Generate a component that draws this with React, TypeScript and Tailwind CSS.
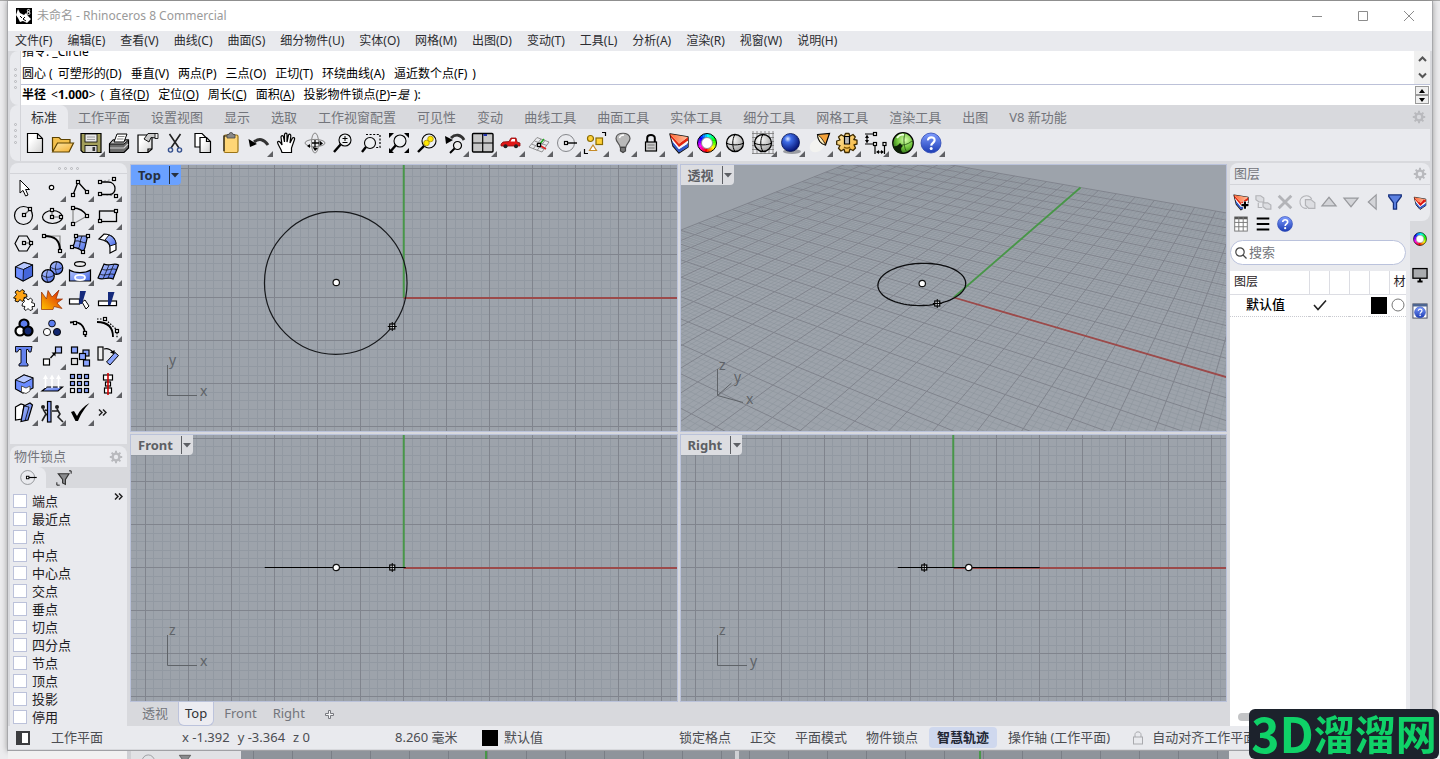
import React from "react";

/* ---------- drawing helpers ---------- */

const P = ({ x, y }: { x: number; y: number }) => (
  <rect x={x - 1.5} y={y - 1.5} width="3" height="3" fill="#fff" stroke="#000" strokeWidth="1.2" />
);

const Cell = ({ children, flyout, size = 28 }: { children: React.ReactNode; flyout?: boolean; size?: number }) => (
  <svg width={size} height={size} viewBox="-14 -14 28 28" fill="none" stroke="#000" strokeWidth="1.2" aria-hidden="true">
    {children}
    {flyout && <path d="M14 8 V14 H8 Z" fill="#5f6064" stroke="none" />}
  </svg>
);

const Defs = () => (
  <svg width="0" height="0" className="absolute" aria-hidden="true">
    <defs>
      <linearGradient id="blue" x1="0" y1="0" x2="1" y2="1">
        <stop offset="0" stopColor="#b9c9ff" />
        <stop offset="1" stopColor="#4467e6" />
      </linearGradient>
      <linearGradient id="paper" x1="0" y1="0" x2="1" y2="1">
        <stop offset="0.3" stopColor="#ffffff" />
        <stop offset="1" stopColor="#cfcfcf" />
      </linearGradient>
      <linearGradient id="orange" x1="1" y1="0" x2="0" y2="1">
        <stop offset="0.2" stopColor="#e03a06" />
        <stop offset="1" stopColor="#ffc400" />
      </linearGradient>
      <linearGradient id="yellow" x1="0" y1="0" x2="1" y2="1">
        <stop offset="0" stopColor="#ffe9a8" />
        <stop offset="1" stopColor="#f2ad2c" />
      </linearGradient>
      <linearGradient id="coral" x1="0" y1="0" x2="1" y2="0">
        <stop offset="0" stopColor="#ff6a35" />
        <stop offset="1" stopColor="#ffc1a0" />
      </linearGradient>
      <linearGradient id="help" x1="0" y1="0" x2="0" y2="1">
        <stop offset="0" stopColor="#7f9dff" />
        <stop offset="1" stopColor="#1c3cb4" />
      </linearGradient>
      <radialGradient id="ballBlue" cx="0.35" cy="0.3" r="0.75">
        <stop offset="0" stopColor="#dfeaff" />
        <stop offset="0.25" stopColor="#3f6de8" />
        <stop offset="1" stopColor="#020d6b" />
      </radialGradient>
      <radialGradient id="ballGreen" cx="0.6" cy="0.35" r="0.75">
        <stop offset="0" stopColor="#d9ffb0" />
        <stop offset="0.5" stopColor="#74c83e" />
        <stop offset="1" stopColor="#1b5a0c" />
      </radialGradient>
      <radialGradient id="ballGray" cx="0.35" cy="0.3" r="0.8">
        <stop offset="0" stopColor="#ffffff" />
        <stop offset="1" stopColor="#9a9a9a" />
      </radialGradient>
    </defs>
  </svg>
);

const Wheel = ({ r = 8, w = 4 }: { r?: number; w?: number }) => (
  <g>
    {Array.from({ length: 24 }, (_, i) => {
      const a = (i / 24) * Math.PI * 2;
      const b = ((i + 1.15) / 24) * Math.PI * 2;
      return (
        <path
          key={i}
          d={`M${Math.cos(a) * r} ${Math.sin(a) * r} A${r} ${r} 0 0 1 ${Math.cos(b) * r} ${Math.sin(b) * r}`}
          stroke={`hsl(${(360 - i * 15 + 90) % 360} 100% 50%)`}
          strokeWidth={w}
        />
      );
    })}
    <circle r={r + w / 2} strokeWidth="1" />
    <circle r={r - w / 2} fill="#fff" strokeWidth="0.8" stroke="#777" />
  </g>
);

const Lens = ({ x = 2, y = -3, r = 6 }: { x?: number; y?: number; r?: number }) => (
  <g>
    <path d={`M${x - r * 0.7} ${y + r * 0.7} L-9 9`} strokeWidth="2.4" />
    <circle cx={x} cy={y} r={r} fill="#eef0f2" strokeWidth="1.1" />
  </g>
);

const Layers = ({ check }: { check?: boolean }) => (
  <g stroke="none">
    <path d="M-9 -9 L9 -6 V4 L0 10 L-6 3Z" fill="#fff" stroke="#111" strokeWidth="1.4" strokeLinejoin="round" />
    <path d="M-7 -2 L0 6 L9 0.5 V4 L0 9.5 L-6 2.5Z" fill="#2f57c8" />
    <path d="M-8 -6 L0 3.5 L9 -2.5 V0 L0 6.3 L-7 -2.5Z" fill="#f4f6fb" />
    <path d="M-9 -9 L0 0.5 L9 -6 V-2.5 L0 4 L-8 -5.5Z" fill="#e3260f" />
    <path d="M-9 -9 L9 -6 L0 0.8Z" fill="url(#coral)" />
    {check && <path d="M-2 -1 L1 3 L7 -5" stroke="#d11" strokeWidth="2.2" />}
  </g>
);

const HelpBall = ({ r = 10 }: { r?: number }) => (
  <g>
    <circle r={r} fill="url(#help)" stroke="#2c48b4" strokeWidth="0.8" />
    <path
      d="M-3 -2.6 C-3.2 -6.6 3.6 -6.8 3.6 -2.8 C3.6 -0.4 0.4 0 0.2 2.6"
      stroke="#fff"
      strokeWidth="2.2"
      transform={`scale(${r / 10})`}
    />
    <circle cx="0.2" cy={5.6 * (r / 10)} r={1.5 * (r / 10)} fill="#fff" stroke="none" />
  </g>
);

const WireBall = ({ r = 8.5 }: { r?: number }) => (
  <g strokeWidth="1.3">
    <circle r={r} fill="url(#ballGray)" />
    <path d={`M${-r} 0 C-5 2.5 5 2.5 ${r} 0 M0 ${-r} C-3 -4 -3 4 0 ${r}`} strokeWidth="1" />
  </g>
);

const Gear = () => (
  <svg width="14" height="14" viewBox="-7 -7 14 14" fill="none" stroke="#b9babe" aria-hidden="true">
    <circle r="3.4" strokeWidth="2.4" />
    {Array.from({ length: 8 }, (_, i) => (
      <path key={i} d="M0 -3.6 V-6.2" strokeWidth="2" transform={`rotate(${i * 45})`} />
    ))}
  </svg>
);

const SnapMark = () => (
  <g>
    <circle cx="-1" r="8.5" stroke="#85878b" strokeWidth="1" />
    <path d="M0 0 H10" strokeWidth="1.4" />
    <P x={-1} y={0} />
  </g>
);

const More = () => (
  <svg width="9" height="7" viewBox="0 0 9 7" fill="none" stroke="#222" strokeWidth="1.5" aria-hidden="true">
    <path d="M1 0.5L4 3.5L1 6.5M5 0.5L8 3.5L5 6.5" />
  </svg>
);

/* ---------- toolbar ---------- */

type Tool = { name: string; fly?: boolean; art: React.ReactNode };

const COG =
  "M-1.5 -9.5 H2 L2.8 -6.8 L6 -8.5 L8.3 -6 L6.8 -3.5 L10 -2.8 V1 L7 1.8 L8.5 5 L6 7.5 L3 6 L2 9.5 H-2 L-3 6.2 L-6 8 L-8.5 5.3 L-7 2.5 L-10.3 1.5 V-2 L-7 -3 L-8.5 -6 L-5.8 -8.3 L-2.8 -6.5Z";

const toolbar: Tool[] = [
  { name: "新建", art: <><path d="M-7.5 -9.5 H2.5 L7.5 -4.5 V9.5 H-7.5Z" fill="url(#paper)" /><path d="M2.5 -9.5 V-4.5 H7.5" /></> },
  { name: "打开", art: <><path d="M-10.5 8 V-5.5 H-4 L-2 -3.5 H7 V0" fill="#f3c04c" stroke="#5c4200" /><path d="M-10.5 9 L-5.5 0 H10.5 L6 9Z" fill="url(#yellow)" stroke="#5c4200" /></> },
  { name: "保存", fly: true, art: <><path d="M-10 -9.5 H10 V9.5 H-8 L-10 7.5Z" fill="#a39f5a" /><rect x="-6" y="-9" width="12" height="8" fill="#e8e8e8" strokeWidth="0.8" /><path d="M-4 -6 H4 M-4 -3.5 H4" stroke="#888" strokeWidth="0.8" /><rect x="-6" y="2.5" width="12" height="7" fill="#dcdcdc" strokeWidth="0.8" /><rect x="1.5" y="4" width="2.6" height="4" fill="#333" stroke="none" /></> },
  { name: "打印", art: <><path d="M-9.5 1 L-6 -3 H9.5 V5 L5 9.5 H-9.5Z" fill="#6b6b6b" /><path d="M-9.5 1 L-6 -3 H9.5 L5 1Z" fill="#c4c4c4" strokeWidth="0.9" /><path d="M-5 -1 L-2 -9 H8 L5 -1Z" fill="#fff" strokeWidth="1" /><path d="M-1 -6.5 H5.5 M-2 -4 H4.5" stroke="#777" strokeWidth="0.9" /><path d="M-9 5 H5 L9 1" stroke="#d0d0d0" strokeWidth="1.2" /></> },
  { name: "文件属性", art: <><path d="M-9 -8 H5 V6 L1 9.5 H-9Z" fill="url(#paper)" /><path d="M1 9.5 V6 H5" /><path d="M-3 -4 L1 -9.5 H9.5 V-5 L4 -5.5 L2 -1 Z" fill="#c9c9c9" strokeWidth="0.9" /><path d="M8 -9.5 H11 V-4.5 H8Z" fill="#eee" strokeWidth="0.8" /></> },
  { name: "剪切", art: <><path d="M-5.5 -9 L4 5 M5.5 -9 L-4 5" stroke="#222" strokeWidth="1.6" /><circle cx="-4.5" cy="7" r="2.1" stroke="#34508f" strokeWidth="1.4" /><circle cx="4.5" cy="7" r="2.1" stroke="#34508f" strokeWidth="1.4" /></> },
  { name: "复制", art: <><path d="M-8 -9.5 H-1 L3 -5.5 V4 H-8Z" fill="#fff" /><path d="M-3 -5.5 H3.5 L7.5 -1.5 V9.5 H-3Z" fill="url(#paper)" /><path d="M3.5 -5.5 V-1.5 H7.5" /></> },
  { name: "粘贴", art: <><rect x="-7" y="-8" width="14" height="17.5" rx="1.5" fill="#ffd676" stroke="#9b7416" /><path d="M-7 8 V-7 H-4" stroke="#222" /><path d="M-4 -5 V-8.5 H-2 A2 2 0 0 1 2 -8.5 H4 V-5Z" fill="#888" stroke="#444" strokeWidth="0.8" /></> },
  { name: "撤销", fly: true, art: <><path d="M-5 -1 C0 -5 5 -4 9 2" stroke="#333" strokeWidth="3" /><path d="M-10.5 -4 L-9 4 L-2 1Z" fill="#000" stroke="none" /></> },
  { name: "平移", art: <path d="M-5 9.5 C-6 5 -9.5 2 -9.5 -1 C-8 -3 -6 0 -5 2 L-6 -6 C-5.5 -8 -3.8 -7.5 -3.5 -6 L-2.5 -1 V-8.5 C-2 -10.5 0 -10 0 -8.5 V-1 L1.5 -8 C2.5 -9.5 4 -8.5 3.8 -7 L3 0 L5.5 -5 C7 -6 8 -5 7.5 -3.5 L4.5 5 V9.5Z" fill="#fff" /> },
  { name: "旋转视图", art: <><ellipse rx="10" ry="3.6" stroke="#888" strokeWidth="1" /><ellipse rx="3.6" ry="10" stroke="#888" strokeWidth="1" /><path d="M-3 0 H4 M0 -3 V4" strokeWidth="1.3" /><path d="M4.5 -2.5 L8 0.5 L4.5 3Z M-2.5 4 L0 8 L3 5Z M-5 1 L-8 3 L-5 5Z" fill="#000" stroke="none" /></> },
  { name: "缩放", art: <><Lens /><path d="M-0.5 -4.5 H4.5 M2 -7 V-2 M-0.5 -0.5 H4.5" strokeWidth="1" /></> },
  { name: "框选缩放", art: <><path d="M-5 -8.5 H9 V4.5 H4" strokeDasharray="2 1.6" /><Lens x={-1} y={0} r={5.5} /></> },
  { name: "缩放至最大范围", art: <><Lens x={1} y={-2} r={6} /><path d="M-10 -5 V-10 H-5Z M10 -5 V-10 H5Z M10 5 V10 H5Z M-10 5 V10 H-5Z" fill="#000" stroke="none" /></> },
  { name: "缩放至选取物件", art: <><Lens x={2} y={-2} r={7} /><circle cx="3.5" cy="-4" r="2.8" fill="#ffe800" stroke="#a98f00" strokeWidth="0.8" /><circle cx="-0.5" cy="0" r="2.8" fill="#ffe800" stroke="#a98f00" strokeWidth="0.8" /></> },
  { name: "撤销视图改变", fly: true, art: <><path d="M-4 -5 C0 -9 6 -9 9 -3" stroke="#333" strokeWidth="2.8" /><path d="M-10 -7 L-9 1 L-2 -3Z" fill="#000" stroke="none" /><circle cx="2.5" cy="2.5" r="4" fill="#eee" /><path d="M-0.5 5.5 L-5 10" strokeWidth="2" /></> },
  { name: "工作视窗配置", fly: true, art: <><rect x="-10.5" y="-9.5" width="20.5" height="18.5" rx="1" fill="#c7c7c7" strokeWidth="1.4" /><path d="M-0.3 -9 V9 M-10 0 H10" strokeWidth="1.2" /><path d="M0.5 -8 H4" stroke="#23a" strokeWidth="2" /></> },
  { name: "设置视图", fly: true, art: <><path d="M-10 1 L-8 -1 L-2 -1.5 L0 -5 H5 L6 -1 L9 0 V3 H-10Z" fill="#e01818" stroke="#8d0c0c" strokeWidth="0.8" /><path d="M-0.5 -1.5 L1 -4 H4 V-1.5Z" fill="#fff" stroke="none" /><circle cx="-5.5" cy="3.3" r="2" fill="#222" stroke="none" /><circle cx="5" cy="3.3" r="2" fill="#222" stroke="none" /></> },
  { name: "工作平面", fly: true, art: <><path d="M-10 4 L-2 -5.5 L10 -1 L3 9Z M-7.5 1 L5 6 M-4.5 -2 L8 2.5 M-6 6 L2 -4 M-2 7.5 L6 -2.5" stroke="#888" strokeWidth="0.9" /><path d="M0 2 L7 6" stroke="#d22" strokeWidth="1.5" /><path d="M0 2 L5 -4" stroke="#2a2" strokeWidth="1.5" /><P x={0} y={2} /></> },
  { name: "物件锁点", fly: true, art: <SnapMark /> },
  { name: "选取", fly: true, art: <><circle cx="-4.5" cy="-4.5" r="3" fill="#ffd23a" stroke="#8b6c00" /><rect x="1" y="-5" width="6.5" height="6.5" fill="#ffd23a" stroke="#8b6c00" /><path d="M-2 2 L1.5 7.5 H-5.5Z" fill="#fff" stroke="#c58a28" /><path d="M7 -10.5 H10.5 V-7 M-10.5 6 V10.5 H-7" /></> },
  { name: "隐藏物件", fly: true, art: <><path d="M-3 4 C-3 1 -7 -1 -7 -4.5 C-7 -11.5 7 -11.5 7 -4.5 C7 -1 3 1 3 4Z" fill="#b9b9b9" stroke="#555" /><path d="M-3.5 -5 C-3 -7 -1 -8 1 -8" stroke="#fff" strokeWidth="1.5" /><path d="M-2.5 4.5 H2.5 V8 L0 9.5 L-2.5 8Z" fill="#777" stroke="#444" /></> },
  { name: "锁定物件", fly: true, art: <><path d="M-3.8 0 V-5 C-3.8 -9 3.8 -9 3.8 -5 V0" strokeWidth="2" /><rect x="-5.5" y="-1" width="11" height="9" fill="#c9c9c9" /><path d="M-3.5 2 H3.5 M-3.5 5 H3.5" stroke="#777" /></> },
  { name: "图层", fly: true, art: <Layers /> },
  { name: "物件属性", fly: true, art: <Wheel r={7.5} w={4} /> },
  { name: "着色", art: <WireBall /> },
  { name: "渲染着色", fly: true, art: <><path d="M-11 -9.5 H11 M-11 -5.5 H11 M-11 -1.5 H11 M-11 2.5 H11 M-11 6.5 H11 M-11 10.5 H11 M-10 -12 V11 M-6 -12 V11 M-2 -12 V11 M2 -12 V11 M6 -12 V11 M10 -12 V11" stroke="#777" strokeWidth="0.8" /><WireBall /></> },
  { name: "渲染", fly: true, art: <><ellipse cx="1" cy="8.5" rx="9" ry="2.4" fill="#9a9ca2" stroke="none" /><circle cx="-0.5" cy="-0.5" r="9" fill="url(#ballBlue)" stroke="#03104f" strokeWidth="0.8" /></> },
  { name: "灯光", fly: true, art: <><ellipse cx="-3" cy="1" rx="8" ry="6" fill="#f3f3f0" stroke="none" transform="rotate(-35)" /><path d="M-1.5 -8.5 L10.5 -9.5 L6.5 2 C2 1 -1 -3 -1.5 -8.5Z" fill="#f5a23a" /><path d="M-1.5 -8.5 C1 -7 5 -2 6.5 2 C2 1 -1 -3 -1.5 -8.5Z" fill="#fff0c0" strokeWidth="0.8" /></> },
  { name: "选项", fly: true, art: <><path d={COG} fill="url(#yellow)" stroke="#3d2a00" strokeWidth="1.3" strokeLinejoin="round" /><path d="M-2.5 -6.5 H2.5 V1 H-2.5Z" fill="#b8b8b8" /><path d="M-3 4 C-1 5.5 1 5.5 3 4" stroke="#7a5200" /></> },
  { name: "尺寸标注", fly: true, art: <><path d="M-10 -9 H-1 M-10 1 H-2 M-8 -7 V-1 M0 3 V11 M9.5 3 V11 M2 9 H8" /><path d="M-10 -5 L-8 -8.5 L-6 -5Z M-10 -3 L-8 0.5 L-6 -3Z M4 7 L1 9 L4 11Z M6 7 L9 9 L6 11Z" fill="#000" stroke="none" /><P x={0} y={-9} /><P x={0} y={1} /><P x={9.5} y={1} /></> },
  { name: "材质", fly: true, art: <><circle r="10.3" fill="url(#ballGreen)" /><path d="M-10 3 C-6 4 -5 2 -3 0 L0 3 C-3 5 -2 8 0 10 C-5 11 -9 8 -10 3Z" fill="#0c1f06" stroke="none" /><path d="M-1 2 C4 2 8 -1 10 -3 M2 -10 C0 -4 1 6 4 9" stroke="#2f5d18" strokeWidth="0.9" /><path d="M-6 -5 C-4 -8 -1 -9 1 -8" stroke="#f2ffe6" strokeWidth="1.8" /></> },
  { name: "说明", fly: true, art: <HelpBall /> },
];

const palette: Tool[] = [
  { name: "指针", art: <path d="M-4 -8 V5 L-1 2.4 L1.6 8 L4 7 L1.6 1.5 H5.5Z" fill="#fff" strokeWidth="1" /> },
  { name: "单点", fly: true, art: <circle cx="-0.5" cy="-0.5" r="2.2" fill="#fff" /> },
  { name: "多重直线", fly: true, art: <><path d="M-7 7 L-2 -6 L7 4" strokeWidth="1.3" /><P x={-7} y={7} /><P x={-2} y={-6} /><P x={7} y={4} /></> },
  { name: "控制点曲线", fly: true, art: <><path d="M-8 -6 L6 -9 M8 8 L-8 6" stroke="#777" strokeDasharray="2 2" strokeWidth="0.8" /><path d="M-8 -6 H0 C9 -6 9 6 2 6.5 H-8" strokeWidth="1.3" /><P x={-8} y={-6} /><P x={6} y={-9} /><P x={-8} y={6} /><P x={8} y={8} /></> },
  { name: "圆", fly: true, art: <><circle cx="-0.5" cy="-0.5" r="9" strokeWidth="1.2" /><path d="M0 -1 L6 -6.5" stroke="#666" /><P x={0} y={-1} /><P x={6} y={-7} /></> },
  { name: "椭圆", fly: true, art: <><ellipse cx="0.5" cy="1" rx="10" ry="6.5" strokeWidth="1.2" /><path d="M0 -6 V1 H9" stroke="#666" /><P x={0} y={-6} /><P x={0} y={1} /><P x={9} y={1} /></> },
  { name: "圆弧", fly: true, art: <><path d="M-7 -8 V8 L7 0" stroke="#888" /><path d="M-7 -8 C-1 -8 4 -5 7 0" strokeWidth="1.3" /><P x={-7} y={-8} /><P x={-7} y={8} /><P x={7} y={0} /></> },
  { name: "矩形", fly: true, art: <><rect x="-8.5" y="-5" width="17" height="10.5" strokeWidth="1.3" /><P x={8} y={-5} /><P x={-8} y={5} /></> },
  { name: "多边形", fly: true, art: <><path d="M-9 -0.5 L-5 -8 H3 L7.5 -0.5 L3 7 H-5Z" strokeWidth="1.2" /><path d="M0 -1 H7" stroke="#666" /><P x={0} y={-1} /><P x={7} y={-1} /></> },
  { name: "曲线圆角", fly: true, art: <><path d="M-8 -8 H8 V7" stroke="#888" /><path d="M-8 -8 C3 -8 8 -4 8 7" strokeWidth="2" /><P x={-8} y={-8} /><P x={8} y={7} /></> },
  { name: "曲面", fly: true, art: <><path d="M-4 -8 L8 -8 C5 -2 7 2 3 8 C0 4 -3 4 -8 3 C-4 0 -6 -4 -4 -8Z" fill="url(#blue)" /><path d="M2 -8 C-1 -2 1 2 -2 5 M-5 -3 C-1 -4 3 -1 6 -1" strokeWidth="0.8" /><P x={-4} y={-8} /><P x={8} y={-8} /><P x={3} y={8} /><P x={-8} y={3} /></> },
  { name: "旋转成形", fly: true, art: <><path d="M-9 -5 L-4 -10 C4 -10 8 -5 8 2 V6 L2 9 V4 C2 -1 -3 -4 -9 -5Z" fill="#fff" /><path d="M-3 -4 L1 -9 C6 -7 8 -3 8 0 L2 2 C1 -1 0 -3 -3 -4Z" fill="url(#blue)" strokeWidth="0.9" /></> },
  { name: "立方体", fly: true, art: <><path d="M-8.5 -5 L0 -9.5 L8.5 -7 V4 L-1 9 L-8.5 5Z" fill="#6b8cff" /><path d="M-8.5 -5 L0 -9.5 L8.5 -7 L-0.5 -2.5Z" fill="#b7c8ff" strokeWidth="0.8" /><path d="M-0.5 -2.5 L8.5 -7 V4 L-1 9Z" fill="#4466da" strokeWidth="0.8" /></> },
  { name: "布尔运算", fly: true, art: <><circle cx="4.5" cy="-4" r="6.3" fill="url(#blue)" /><path d="M-1.5 -5 C2 -2 8 -2 10.5 -5 M5 -10 C3 -6 3 -1 5 2" strokeWidth="0.7" /><circle cx="-4" cy="4" r="6.3" fill="url(#blue)" /><path d="M-10 3 C-7 6 -1 6 2 3 M-4 -2 C-6 2 -6 6 -4 10" strokeWidth="0.7" /></> },
  { name: "投影曲线", fly: true, art: <><ellipse cy="-8" rx="5.5" ry="2.4" fill="#eee" /><path d="M-10.5 -2 C-5 1.5 5 1.5 10.5 -2 V9 H-10.5Z" fill="url(#blue)" /><ellipse cy="5.5" rx="5" ry="2.6" fill="#8fa8ff" stroke="#fff" strokeWidth="1.8" /></> },
  { name: "网格", fly: true, art: <><path d="M-4 -8 C1 -5 6 -10 10.5 -7 L5 7 C0 4 -5 9 -10 6Z" fill="url(#blue)" /><path d="M1 -7 L-5 7 M6 -8 L0 6 M-6 -3 C-1 0 4 -5 9 -2 M-8 2 C-3 5 2 0 7 3" strokeWidth="0.7" /></> },
  {
    name: "组合",
    fly: true,
    art: (
      <>
        <path d="M-9.5 -3 L-7.5 -5.5 L-9 -8 L-6.5 -10 L-4.5 -8 L-2 -10.5 L0.5 -9 L-0.5 -6.5 L2.5 -6 L3 -3 L0 -2.5 L0.5 0 L-2 1.5 L-4 -0.5 L-6 2 L-9 1 L-8 -1.5 L-10.5 -2Z" fill="#ffa413" strokeWidth="0.9" />
        <path d="M-1.5 3.5 L0.5 1.5 L-0.5 -1 L2 -2.5 L4 0 L6.5 -2 L8.5 0 L7.5 2.5 L10.5 3.5 L10.5 6.5 L8 6.5 L8.5 9.5 L6 10.5 L4 8.5 L2 10.5 L0 9 L1 6.5 L-2 6Z" fill="#fff" strokeWidth="0.9" />
      </>
    ),
  },
  { name: "炸开", art: <path d="M-10.5 9.5 V-8 L-5.5 -1 L-4 -9.5 L0 -3 L7 -10 L4 -1 L10.5 -1 L5 3 L10 8.5 L2 6.5 L1 9.5Z" fill="url(#orange)" stroke="#8f2c00" strokeWidth="0.7" /> },
  { name: "修剪", art: <><rect x="-10.5" y="-1" width="10" height="5" fill="#fff" /><path d="M2 2 L5 0 L9 6 L6 9Z" fill="#fff" strokeWidth="1" /><path d="M0 -9 H6 L2 4 H-1Z" fill="#152a7c" stroke="none" /></> },
  { name: "分割", art: <><rect x="-9.5" y="1" width="18" height="4.6" fill="#fff" /><path d="M0 -8 H6.5 L2.5 5 H0Z" fill="#152a7c" stroke="none" /></> },
  { name: "群组", fly: true, art: <><circle cx="0" cy="-4" r="4.5" fill="#5c7df0" strokeWidth="2.2" /><circle cx="-4" cy="3" r="4.5" fill="#fff" strokeWidth="2.2" /><circle cx="4" cy="3" r="4.5" fill="#12276f" strokeWidth="2.2" /></> },
  { name: "解散群组", art: <><circle cx="0" cy="-4.5" r="3.4" fill="#5c7df0" strokeWidth="0.9" /><circle cx="-5" cy="4" r="3.6" fill="#fff" strokeWidth="0.9" /><circle cx="5" cy="4" r="3.6" fill="#12276f" strokeWidth="0.9" /></> },
  { name: "编辑曲线", art: <><path d="M-10 -5.5 C0 -7 5 -3 5.5 9" strokeWidth="1.8" /><P x={-5} y={-5} /><P x={5} y={5} /></> },
  { name: "打开控制点", fly: true, art: <><path d="M-11 -9 H-3 L9 2 V10" strokeDasharray="1.5 1.5" /><path d="M-11 -6 C0 -6 5 0 5 9" strokeWidth="1.8" /><P x={-3} y={-9} /><P x={9} y={3} /></> },
  { name: "文字", art: <path d="M-8.5 -9.5 H8 L7 -4 H5 L4 -6.5 H2.5 V7 L4 8 V10 H-5 V8 L-3 7 V-6.5 H-5 L-6.5 -4 H-8.5Z" fill="#6482ee" strokeWidth="0.9" /> },
  { name: "移动", fly: true, art: <><rect x="3.5" y="-9" width="6" height="6" fill="#a9bcff" /><rect x="-8.5" y="3" width="6" height="6" fill="#fff" /><path d="M-1.5 2 L3 -3" strokeWidth="1.3" /><path d="M-0.5 -3.5 H3.5 V0.5Z" fill="#000" stroke="none" /></> },
  { name: "复制物件", art: <><g fill="#8ba5ff"><rect x="-8.5" y="-9" width="6" height="6" /><rect x="3" y="-6" width="6" height="6" /><rect x="-0.5" y="-2.5" width="6" height="6" /><rect x="3.5" y="4" width="6" height="6" /></g><rect x="-8.5" y="2.5" width="6" height="6" fill="#e2e2e2" /></> },
  { name: "旋转", art: <><rect x="-10" y="-9" width="5" height="13" fill="#eee" /><path d="M-4 -7 C0 -8 4 -6 5 -3" /><path d="M2 -3.5 L7 -1.5 L6.5 -6Z" fill="#000" stroke="none" /><path d="M-1.5 6 L7 -3.5 L10.5 -0.5 L2 9Z" fill="#8ba5ff" strokeWidth="1" /></> },
  { name: "实体编辑", fly: true, art: <><path d="M-8.5 -4 L0 -9 L9 -6 V4 L-1 9 L-8.5 5Z" fill="#6b8cff" /><path d="M-8.5 -4 L0 -9 L9 -6 L0 -1Z" fill="#b7c8ff" strokeWidth="0.8" /><path d="M-2.5 2 L2 4 L6 2 V7 L2 9.5 L-2.5 8Z" fill="#fff" stroke="#444" strokeWidth="0.9" /></> },
  { name: "挤出", fly: true, art: <><path d="M-10 7 L-5 3 H10.5 L6 7Z" fill="url(#blue)" /><path d="M-6.5 4 V-6 M0 4 V-6 M6.5 4 V-6" stroke="#fff" strokeWidth="1.6" /><path d="M-9 -5 L-6.5 -9.5 L-4 -5Z M-2.5 -5 L0 -9.5 L2.5 -5Z M4 -5 L6.5 -9.5 L9 -5Z" fill="#fff" stroke="none" /></> },
  { name: "阵列", fly: true, art: <g>{[-9.5, -2.5, 4.5].map((y) => [-9.5, -2.5, 4.5].map((x) => <rect key={`${x}${y}`} x={x} y={y} width="4" height="4" fill={x < -9 && y > 4 ? "#fff" : "#8fa8ff"} />))}</g> },
  { name: "对齐", fly: true, art: <><rect x="-4.5" y="-9" width="9" height="5" fill="#fff" /><rect x="-2.5" y="-2" width="5" height="4" fill="#fff" /><rect x="-3.5" y="4" width="7" height="5" fill="#fff" /><path d="M0 -11 V11" stroke="#d40000" strokeWidth="1.6" /></> },
  { name: "变形", fly: true, art: <><path d="M-8.5 -5 L-3 -8 L0 -7 L-2 7 L-8.5 8Z" fill="#fff" /><path d="M0 -6 L6 -9 L8.5 -7 L4 8 L-3 9.5Z" fill="url(#blue)" /><path d="M0 -6 L5 -5 L1 9" strokeWidth="0.8" /></> },
  { name: "分析", fly: true, art: <><circle cx="-9" cy="-5" r="2" fill="#222" stroke="none" /><circle cx="5" cy="-5" r="2" fill="#222" stroke="none" /><path d="M-9 -3 L-6 2 L-10 9 M-7 -2 L-2 -1 M5 -3 L8 2 L6 5 L11 10 M6 -1 H0 M-5 2 L-3 8" stroke="#222" strokeWidth="1.6" /><rect x="-4.5" y="-10.5" width="3.5" height="20.5" fill="#86a0ff" /></> },
  { name: "检查物件", fly: true, art: <path d="M-9 0 L-6 -1 L-3 4 C0 -2 4 -6 9.5 -9 C4 -3 1 2 -2 9 H-4.5Z" fill="#000" stroke="none" /> },
];

/* ---------- viewports ---------- */

const UNIT = 8.616;
const gridPath = (major: boolean) => {
  const out: string[] = [];
  for (let i = -160; i <= 160; i++) {
    if ((i % 5 === 0) !== major) continue;
    const p = Math.round(i * UNIT) - 0.5;
    out.push(`M${p} -1400V1400M-1400 ${p}H1400`);
  }
  return out.join("");
};
const MINOR = gridPath(false);
const MAJOR = gridPath(true);

const project = (x: number, y: number): [number, number] => {
  const w = 1 - 0.0042 * x + 0.00723 * y;
  return [(4.716 * x + 2.728 * y) / w, (1.3775 * x - 2.3665 * y) / w - 0.5];
};
const seg = (x1: number, y1: number, x2: number, y2: number) => {
  const a = project(x1, y1);
  const b = project(x2, y2);
  return `M${a[0].toFixed(2)} ${a[1].toFixed(2)}L${b[0].toFixed(2)} ${b[1].toFixed(2)}`;
};
const perspPath = (major: boolean) => {
  let d = "";
  for (let i = -70; i <= 70; i++) {
    if ((i % 5 === 0) !== major) continue;
    d += seg(i, -70, i, 70) + seg(-70, i, 70, i);
  }
  return d;
};
const P_MINOR = perspPath(false);
const P_MAJOR = perspPath(true);
const P_CIRCLE =
  "M" +
  Array.from({ length: 90 }, (_, i) => {
    const t = (i / 90) * Math.PI * 2;
    const [x, y] = project(-8.05 + 8.4 * Math.cos(t), 1.72 + 8.4 * Math.sin(t));
    return `${x.toFixed(2)} ${y.toFixed(2)}`;
  }).join("L") +
  "Z";

const Dot = ({ x, y }: { x: number; y: number }) => (
  <circle cx={x} cy={y} r="3.2" fill="#fff" stroke="#111" strokeWidth="1.2" />
);
const Cross = ({ x, y }: { x: number; y: number }) => (
  <g stroke="#000">
    <rect x={x - 2.5} y={y - 2.5} width="5" height="5" fill="#dfe2e6" strokeWidth="1.2" />
    <path d={`M${x - 4.5} ${y}H${x + 4.5}M${x} ${y - 4.5}V${y + 4.5}`} strokeWidth="1" />
  </g>
);

const AxisMark = ({ up, across }: { up: string; across: string }) => (
  <svg x="0" y="100%" className="overflow-visible">
    <path d="M36.5 -66V-35.5H66" fill="none" stroke="#5f6368" />
    <g fill="#5f6368" fontSize="14">
      <text x="38" y="-66">{up}</text>
      <text x="69" y="-35">{across}</text>
    </g>
  </svg>
);

const Viewport = ({ title, active, children, marks }: { title: string; active?: boolean; children: React.ReactNode; marks: React.ReactNode }) => (
  <section aria-label={title} className="relative min-h-0 min-w-0 overflow-hidden border border-[#bac2da] bg-[#9da3ab]">
    <svg className="absolute inset-0 h-full w-full" aria-hidden="true">
      <svg x="50%" y="50%" className="overflow-visible">{children}</svg>
      {marks}
    </svg>
    <div
      className={
        active
          ? "relative flex h-5 w-fit items-stretch rounded-br bg-[#6aa1ff] text-[#26303f]"
          : "relative flex h-5 w-fit items-stretch rounded-br bg-[#dcdde1] text-[#5d5f64]"
      }
    >
      <span className="pr-2 pl-[7px] leading-5 font-bold">{title}</span>
      <button aria-label={`${title} 菜单`} className="my-px flex w-3 items-center justify-center border-l border-current">
        <svg width="8" height="5" viewBox="0 0 8 5" aria-hidden="true"><path d="M0 0H8L4 4.6Z" fill="currentColor" /></svg>
      </button>
    </div>
  </section>
);

const FlatGrid = () => (
  <g shapeRendering="crispEdges" fill="none">
    <path d={MINOR} stroke="#9299a2" />
    <path d={MAJOR} stroke="#80848d" />
  </g>
);

/* ---------- panels ---------- */

const Grip = () => (
  <div className="flex w-[11px] shrink-0 flex-col items-center justify-center gap-[3px] rounded-l-lg border-r border-[#d3d4d9] bg-[#e9eaee]">
    {[0, 1, 2, 3].map((i) => (
      <i key={i} className="size-[3px] rounded-full border border-[#b5b6ba]" />
    ))}
  </div>
);

const menus = ["文件(F)", "编辑(E)", "查看(V)", "曲线(C)", "曲面(S)", "细分物件(U)", "实体(O)", "网格(M)", "出图(D)", "变动(T)", "工具(L)", "分析(A)", "渲染(R)", "视窗(W)", "说明(H)"];
const tabs = ["标准", "工作平面", "设置视图", "显示", "选取", "工作视窗配置", "可见性", "变动", "曲线工具", "曲面工具", "实体工具", "细分工具", "网格工具", "渲染工具", "出图", "V8 新功能"];
const history = ["可塑形的(D)", "垂直(V)", "两点(P)", "三点(O)", "正切(T)", "环绕曲线(A)", "逼近数个点(F)"];
const options: [string, string][] = [["直径", "D"], ["定位", "O"], ["周长", "C"], ["面积", "A"]];
const snaps = ["端点", "最近点", "点", "中点", "中心点", "交点", "垂点", "切点", "四分点", "节点", "顶点", "投影", "停用"];

const GRAY = "#b3b4b8";
const layerTools: Tool[] = [
  { name: "新图层", art: <><Layers /><path d="M5 -1 V9 M0 4 H10" stroke="#fff" strokeWidth="5" /><path d="M5 -0.5 V8.5 M0.5 4 H9.5" strokeWidth="2.8" /></> },
  { name: "新子图层", art: <g stroke={GRAY} strokeWidth="1.5" fill="#dcdde1"><path d="M-9 -8 H-3 L1 -5 V0 H-5 L-9 -3Z M0 1 H6 L10 4 V9 H4 L0 6Z" /><path d="M-6 1 V7 H-1" fill="none" /></g> },
  { name: "删除", art: <path d="M-8 -8 L8 8 M8 -8 L-8 8" stroke={GRAY} strokeWidth="3.6" /> },
  { name: "重命名", art: <g stroke={GRAY} strokeWidth="1.5" fill="#dcdde1"><path d="M0 8 A8 8 0 1 1 6 -4" fill="none" /><path d="M-2 -3 H5 L10 1 V8 H2 L-2 4Z" /></g> },
  { name: "上移", art: <path d="M-9 5 L0 -6 L9 5Z" stroke="#98999d" fill="#d3d4d8" strokeWidth="1.5" /> },
  { name: "下移", art: <path d="M-9 -5 L0 6 L9 -5Z" stroke="#98999d" fill="#d3d4d8" strokeWidth="1.5" /> },
  { name: "左移", art: <path d="M4 -9 L-6 0 L4 9Z" stroke="#98999d" fill="#d3d4d8" strokeWidth="1.5" /> },
  { name: "过滤器", art: <path d="M-8 -9 H8 V-7 L2 1 V9 L-2 9 V1 L-8 -7Z" fill="#5b80e0" stroke="#16307e" strokeWidth="1.6" /> },
  { name: "列", art: <><rect x="-8" y="-9" width="16" height="18" fill="#fff" stroke="#777" /><path d="M-8 -7.5 H8" stroke="#555" strokeWidth="3" /><path d="M-8 -2 H8 M-8 3.5 H8 M-2.8 -9 V9 M2.8 -9 V9" stroke="#777" /></> },
  { name: "菜单", art: <path d="M-8 -7 H8 M-8 0 H8 M-8 7 H8" strokeWidth="2.8" /> },
  { name: "图层说明", art: <HelpBall r={9.5} /> },
];

const SidePanelTab = ({ name, active, children }: { name: string; active?: boolean; children: React.ReactNode }) => (
  <button aria-label={name} className={active ? "flex h-9 w-5 items-center justify-center rounded-br-lg bg-[#e9eaee]" : "flex h-9 w-5 items-center justify-center"}>
    {children}
  </button>
);

export default function App() {
  return (
    <div className="flex min-h-screen flex-col bg-[#ececee] font-['Noto_Sans','Noto_Sans_CJK_SC',sans-serif] text-[13px] text-[#1f2023]">
      <Defs />
      <div className="h-px bg-[#a9a9a9]" />
      <div className="mx-[7px] flex min-w-0 flex-1 flex-col border-x border-[#a7a8ab] bg-[#d8d9dd] shadow-[0_0_6px_rgba(0,0,0,0.35)]">
        {/* title bar */}
        <header className="flex h-[30px] items-center bg-white pl-2 text-xs text-[#9a9a9a]">
          <svg width="16" height="16" viewBox="0 0 16 16" aria-hidden="true">
            <rect width="16" height="16" fill="#000" />
            <path d="M0 7 L2 1 L4 5 L8 7 L10 5 L12 8 L15 11 L11 15 L7 13 L4 14 L2 10Z" fill="#fff" />
            <path d="M4 8 L6 10 M9 9 L7 11 L10 13" stroke="#000" fill="none" />
            <circle cx="12.5" cy="2.6" r="1.2" stroke="#fff" fill="none" />
            <circle cx="12.5" cy="5.2" r="1.4" stroke="#fff" fill="none" />
          </svg>
          <h1 className="ml-[5px] flex-1">未命名 - Rhinoceros 8 Commercial</h1>
          <div className="flex">
            {[
              ["最小化", "M0 5.5H10"],
              ["最大化", "M0.5 0.5H9.5V9.5H0.5Z"],
              ["关闭", "M0 0L10 10M10 0L0 10"],
            ].map(([name, d]) => (
              <button key={name} aria-label={name} className="flex h-[30px] w-[46px] items-center justify-center">
                <svg width="10" height="10" viewBox="0 0 10 10" fill="none" stroke="#8c8c8c"><path d={d} /></svg>
              </button>
            ))}
          </div>
        </header>

        {/* menu */}
        <nav className="flex h-5 items-center gap-[15px] bg-[#e9eaee] pl-[7px] text-xs text-[#2b2c30]">
          {menus.map((m) => (
            <button key={m} className="leading-5 whitespace-nowrap">{m}</button>
          ))}
        </nav>

        {/* command area */}
        <div className="mx-[2px] flex h-[54px] text-xs text-black">
          <Grip />
          <div className="flex min-w-0 flex-1 flex-col bg-white">
            <div className="flex h-[33px]">
              <div className="flex min-w-0 flex-1 flex-col justify-end overflow-hidden pl-px">
                <div className="h-[21px] shrink-0 leading-[19px]">指令: _Circle</div>
                <div className="flex h-[21px] shrink-0 items-center gap-[5px] whitespace-nowrap">
                  <span>圆心 (</span>
                  <span className="flex gap-[9px]">{history.map((h) => <span key={h}>{h}</span>)}</span>
                  <span>)</span>
                </div>
              </div>
              <div className="flex w-4 flex-col items-center justify-around bg-[#f0f0f0]">
                {["M1 5L4.5 1.5L8 5", "M1 1.5L4.5 5L8 1.5"].map((d, i) => (
                  <button key={d} aria-label={i ? "向下滚动" : "向上滚动"}>
                    <svg width="9" height="7" viewBox="0 0 9 7" fill="none" stroke="#555" strokeWidth="2"><path d={d} /></svg>
                  </button>
                ))}
              </div>
            </div>
            <div className="flex h-[21px] border-t border-[#bcc1d8]">
              <div className="flex min-w-0 flex-1 items-center gap-[5px] pl-px whitespace-nowrap">
                <b>半径</b>
                <span>&lt;<b>1.000</b>&gt;</span>
                <span>(</span>
                <span className="flex gap-[9px]">
                  {options.map(([n, k]) => (
                    <button key={k}>{n}(<u>{k}</u>)</button>
                  ))}
                  <button>投影物件锁点(<u>P</u>)=<i>是</i></button>
                </span>
                <span>):</span>
              </div>
              <div className="flex w-4 flex-col justify-center px-px">
                {["M0 4L3 0L6 4Z", "M0 0H6L3 4Z"].map((d, i) => (
                  <button key={d} aria-label={i ? "下一条" : "上一条"} className="flex h-[9px] items-center justify-center border border-[#999] bg-[#efefef]">
                    <svg width="6" height="4" viewBox="0 0 6 4"><path d={d} /></svg>
                  </button>
                ))}
              </div>
            </div>
          </div>
        </div>

        {/* toolbar */}
        <div className="mx-[2px] flex h-14 rounded-l-lg">
          <Grip />
          <div className="flex min-w-0 flex-1 flex-col bg-[#e9eaee]">
            <div className="flex h-6 bg-[#d8d9dd]">
              <div role="tablist" className="flex min-w-0 flex-1">
                {tabs.map((t, i) => (
                  <button
                    key={t}
                    role="tab"
                    className={
                      i === 0
                        ? "shrink-0 rounded-tr-lg bg-[#e9eaee] pt-px pr-[11px] pl-[10px] whitespace-nowrap text-[#303135]"
                        : "shrink-0 pt-px pr-[11px] pl-[10px] whitespace-nowrap text-[#73757b]"
                    }
                  >
                    {t}
                  </button>
                ))}
              </div>
              <button aria-label="工具列选项" className="flex w-[18px] items-center"><Gear /></button>
            </div>
            <div className="flex h-8 overflow-hidden">
              {toolbar.map((t) => (
                <button key={t.name} aria-label={t.name} className="size-7 shrink-0">
                  <Cell flyout={t.fly}>{t.art}</Cell>
                </button>
              ))}
            </div>
          </div>
        </div>

        {/* body */}
        <div className="mx-[2px] mt-[2px] flex min-h-0 flex-1">
          <aside className="flex w-[117px] shrink-0 flex-col gap-[2px]">
            <div className="flex-1 rounded-t-lg bg-[#e9eaee]">
              <div className="flex h-[11px] items-center justify-center gap-[3px] border-b border-[#d3d4d9]">
                {[0, 1, 2, 3].map((i) => (
                  <i key={i} className="size-[3px] rounded-full border border-[#b5b6ba]" />
                ))}
              </div>
              <div className="grid w-28 grid-cols-4">
                {palette.map((t) => (
                  <button key={t.name} aria-label={t.name} className="size-7">
                    <Cell flyout={t.fly}>{t.art}</Cell>
                  </button>
                ))}
                <button aria-label="更多工具" className="flex size-7 items-center pl-1"><More /></button>
              </div>
            </div>

            <div className="rounded-t-lg bg-[#e9eaee]">
              <div className="flex h-[21px] items-center justify-between px-1 text-[#73757b]">
                <h2>物件锁点</h2>
                <Gear />
              </div>
              <div className="flex h-[21px] bg-[#d8d9dd]">
                <button aria-label="锁点" className="flex w-9 items-center justify-center rounded-tr-lg bg-[#e9eaee]">
                  <Cell size={23}><SnapMark /></Cell>
                </button>
                <button aria-label="过滤器" className="flex w-9 items-center justify-center">
                  <Cell size={20}>
                    <path d="M-8 -6 H7 L2 2 V9 L-2 7 V2Z" fill="#8a8b8e" stroke="#333" strokeWidth="1.6" />
                    <path d="M7 -10 H10 V-6 M-10 6 V10 H-6" />
                  </Cell>
                </button>
              </div>
              <div className="flex pt-1 pl-[3px]">
                <div className="flex flex-1 flex-col">
                  {snaps.map((s) => (
                    <label key={s} className="flex h-[18px] items-center gap-[5px] leading-[18px]">
                      <input type="checkbox" className="size-[14px] appearance-none border border-[#bcc2da] bg-white" />
                      {s}
                    </label>
                  ))}
                </div>
                <button aria-label="更多锁点" className="flex h-2 w-[13px] items-center"><More /></button>
              </div>
            </div>
          </aside>

          <main className="mx-[3px] mt-px flex min-w-0 flex-1 flex-col">
            <div className="grid min-h-0 flex-1 grid-cols-2 grid-rows-2 gap-[2px]">
              <Viewport title="Top" active marks={<AxisMark up="y" across="x" />}>
                <FlatGrid />
                <path d="M0 0V-1400" stroke="#489648" strokeWidth="2" />
                <path d="M0 0H1400" stroke="#9c4a4a" strokeWidth="2" />
                <circle cx="-68" cy="-15" r="71.3" fill="none" stroke="#16181b" strokeWidth="1.2" />
                <Dot x={-67.5} y={-15.5} />
                <Cross x={-11.5} y={28.5} />
              </Viewport>
              <Viewport
                title="透视"
                marks={
                  <svg x="0" y="100%" className="overflow-visible">
                    <path d="M36.5 -62V-35.5L62 -28.5M36.5 -35.5L50.5 -48" fill="none" stroke="#5f6368" />
                    <g fill="#5f6368" fontSize="14"><text x="38" y="-61">z</text><text x="53" y="-49">y</text><text x="65" y="-27">x</text></g>
                  </svg>
                }
              >
                <path d={P_MINOR} stroke="#8b929b" strokeWidth="0.5" fill="none" />
                <path d={P_MAJOR} stroke="#80848d" strokeWidth="1" fill="none" />
                <path d={seg(0, 0, 0, 70)} stroke="#489648" strokeWidth="1.8" />
                <path d={seg(0, 0, 70, 0)} stroke="#9c4a4a" strokeWidth="1.8" />
                <path d={P_CIRCLE} stroke="#0c0d0f" strokeWidth="1.3" fill="none" />
                <Dot x={-31.5} y={-14.5} />
                <Cross x={-16.5} y={5.5} />
              </Viewport>
              <Viewport title="Front" marks={<AxisMark up="z" across="x" />}>
                <FlatGrid />
                <path d="M0 0V-1400" stroke="#489648" strokeWidth="2" />
                <path d="M0 0H1400" stroke="#9c4a4a" strokeWidth="2" />
                <path d="M-139 -0.5H2" stroke="#000" />
                <Dot x={-67.5} y={-0.5} />
                <Cross x={-11.5} y={-0.5} />
              </Viewport>
              <Viewport title="Right" marks={<AxisMark up="z" across="y" />}>
                <FlatGrid />
                <path d="M-0.5 0V-1400" stroke="#489648" strokeWidth="2" />
                <path d="M0 0H1400" stroke="#9c4a4a" strokeWidth="2" />
                <path d="M-56 -0.5H86" stroke="#000" />
                <Dot x={15} y={-0.5} />
                <Cross x={-29.5} y={-0.5} />
              </Viewport>
            </div>
            <div className="flex h-6 items-start pl-1 text-[#73757b]">
              <button className="h-6 px-2">透视</button>
              <button className="mx-[2px] h-6 rounded-b-md border border-t-0 border-[#bcc3dc] bg-[#ececf1] px-[6px] text-[#303135]">Top</button>
              <button className="h-6 px-2">Front</button>
              <button className="h-6 px-2">Right</button>
              <button aria-label="新增工作视窗" className="flex h-6 items-center px-3">
                <svg width="9" height="9" viewBox="0 0 9 9"><path d="M3.5 0.5H5.5V3.5H8.5V5.5H5.5V8.5H3.5V5.5H0.5V3.5H3.5Z" fill="#f4f4f6" stroke="#77797e" /></svg>
              </button>
            </div>
          </main>

          <aside className="flex w-[200px] shrink-0 flex-col rounded-t-lg bg-[#e9eaee]">
            <div className="flex h-[22px] items-center justify-between border-b border-[#d3d4d9] pr-[3px] pl-1 text-[#73757b]">
              <h2>图层</h2>
              <Gear />
            </div>
            <div className="flex flex-1">
              <div className="flex w-[180px] flex-col pt-[6px] pr-1">
                <div className="grid w-44 grid-cols-8">
                  {layerTools.map((t) => (
                    <button key={t.name} aria-label={t.name} className="flex size-[22px] items-center justify-center">
                      <Cell size={22}>{t.art}</Cell>
                    </button>
                  ))}
                </div>
                <label className="mt-[5px] flex h-[25px] items-center rounded-full border border-[#bac2dc] bg-white pl-1">
                  <svg width="12" height="12" viewBox="0 0 12 12" fill="none" stroke="#444" strokeWidth="1.2" aria-hidden="true"><circle cx="5" cy="5" r="4.2" /><path d="M8 8L11.5 11.5" /></svg>
                  <input type="text" aria-label="搜索" placeholder="搜索" className="ml-[2px] w-32 bg-transparent outline-none placeholder:text-[#74767b]" />
                </label>
                <div className="mt-[6px] flex flex-1 flex-col overflow-hidden bg-white">
                  <table className="w-full table-fixed border-collapse text-left">
                    <thead>
                      <tr className="h-[23px] border-b border-[#dcdde3] text-xs">
                        <th className="w-[79px] border-r border-[#dcdde3] pl-1 font-normal">图层</th>
                        <th className="w-5 border-r border-[#dcdde3]" />
                        <th className="w-5 border-r border-[#dcdde3]" />
                        <th className="w-5 border-r border-[#dcdde3]" />
                        <th className="w-5 border-r border-[#dcdde3]" />
                        <th className="pl-1 font-normal whitespace-nowrap">材</th>
                      </tr>
                    </thead>
                    <tbody>
                      <tr className="h-[22px] border-b border-dotted border-[#c9cad0]">
                        <td className="pl-4 font-medium text-black">默认值</td>
                        <td>
                          <svg width="16" height="12" viewBox="0 0 16 12" className="ml-[3px]" fill="none" stroke="#222" strokeWidth="1.6" aria-label="目前图层"><path d="M2 6L6 10.5L14 1.5" /></svg>
                        </td>
                        <td />
                        <td />
                        <td><span className="ml-[2px] block h-[17px] w-4 bg-black" /></td>
                        <td>
                          <svg width="14" height="14" viewBox="0 0 14 14" className="ml-[2px] max-w-none" fill="#fff" stroke="#777"><circle cx="7" cy="7" r="6" /></svg>
                        </td>
                      </tr>
                    </tbody>
                  </table>
                  <div className="mt-auto mb-[5px] ml-2 h-2 w-24 rounded-full bg-[#c3c4c6]" />
                </div>
              </div>
              <div className="w-5 bg-[#d8d9dd]">
                <SidePanelTab name="图层面板" active><Cell size={18}><Layers check /></Cell></SidePanelTab>
                <SidePanelTab name="属性面板"><Cell size={18}><Wheel r={8} w={4} /></Cell></SidePanelTab>
                <SidePanelTab name="显示面板">
                  <Cell size={18}>
                    <rect x="-11" y="-10" width="22" height="15" fill="#a9abae" strokeWidth="2" />
                    <path d="M-4 10 H4 M0 5 V10" strokeWidth="3" />
                  </Cell>
                </SidePanelTab>
                <SidePanelTab name="说明面板">
                  <Cell size={18}>
                    <rect x="-11" y="-11" width="22" height="22" fill="#fff" stroke="#4d5468" strokeWidth="1.6" />
                    <path d="M-11 -9 H11" stroke="#4d6590" strokeWidth="4" />
                    <g transform="translate(0 2)"><HelpBall r={8.5} /></g>
                  </Cell>
                </SidePanelTab>
              </div>
            </div>
          </aside>
        </div>

        {/* status bar */}
        <footer className="mb-px flex h-[23px] items-center overflow-hidden bg-[#e9eaee] pl-2 whitespace-nowrap text-[#4b4d52]">
          <button aria-label="切换侧栏" className="w-[35px]">
            <svg width="14" height="14" viewBox="0 0 14 14"><rect x="1" y="1" width="12" height="12" fill="#fff" stroke="#3c3d40" strokeWidth="2" /><rect x="1" y="1" width="5" height="12" fill="#3c3d40" /></svg>
          </button>
          <span className="w-[131px]">工作平面</span>
          <span className="flex w-[213px] gap-2">
            <span>x -1.392</span>
            <span>y -3.364</span>
            <span>z 0</span>
          </span>
          <span className="w-[87px]">8.260 毫米</span>
          <span className="mr-[6px] size-4 bg-black" />
          <span className="flex-1">默认值</span>
          <div className="flex w-[753px] shrink-0 items-center">
            <button className="mr-[19px]">锁定格点</button>
            <button className="mr-[19px]">正交</button>
            <button className="mr-[19px]">平面模式</button>
            <button className="mr-[11px]">物件锁点</button>
            <button className="mr-[11px] h-[21px] rounded-sm bg-[#cfd8ee] px-2 font-bold text-[#222734]">智慧轨迹</button>
            <button className="mr-[19px]">操作轴 (工作平面)</button>
            <svg width="10" height="14" viewBox="0 0 10 14" fill="none" stroke="#a9aaae" className="mx-1" aria-hidden="true"><path d="M2 6V3.5C2 0 8 0 8 3.5V6" /><rect x="0.5" y="6" width="9" height="7" /></svg>
            <button className="ml-[5px]">自动对齐工作平面</button>
          </div>
        </footer>
        <div className="h-px bg-[#a0a1a5]" />
      </div>

      {/* window behind */}
      <div className="mx-2 flex h-2 overflow-hidden">
        <div className="w-[119px] bg-[#f1f1f1]" />
        <div className="w-1 bg-[#cfd0d4]" />
        <div className="flex w-[110px] gap-4 bg-[#e1e2e5] pl-2">
          <Cell size={20}><SnapMark /></Cell>
          <Cell size={20}><path d="M-8 -8 H8 L2 0 V9 H-2 V0Z" fill="#8a8b8e" stroke="#555" /></Cell>
        </div>
        <svg className="h-2 w-[494px]" aria-hidden="true">
          <rect width="100%" height="8" fill="#8f949b" />
          <path d={Array.from({ length: 13 }, (_, i) => `M${12.5 + i * 39} 0V8`).join("")} stroke="#7a7e86" />
          <path d="M245 0V8" stroke="#489648" strokeWidth="2" />
        </svg>
        <div className="w-1 bg-[#cfd0d4]" />
        <svg className="h-2 flex-1" aria-hidden="true">
          <rect width="100%" height="8" fill="#8f949b" />
          <path d={Array.from({ length: 13 }, (_, i) => `M${10.5 + i * 39} 0V8`).join("")} stroke="#7a7e86" />
          <path d="M241 0V8" stroke="#489648" strokeWidth="2" />
        </svg>
        <div className="w-[203px] bg-[#e6e6e8]" />
      </div>

      <div className="fixed right-px bottom-0 flex h-[50px] w-[190px] items-center justify-center rounded-md bg-[#1c222c] pb-1 font-['Noto_Sans_CJK_SC',sans-serif] font-bold whitespace-nowrap text-[#0fd268]">
        <span className="text-[48px] leading-[46px]">3D</span>
        <span className="text-[41px] leading-[46px]">溜溜网</span>
      </div>
    </div>
  );
}
